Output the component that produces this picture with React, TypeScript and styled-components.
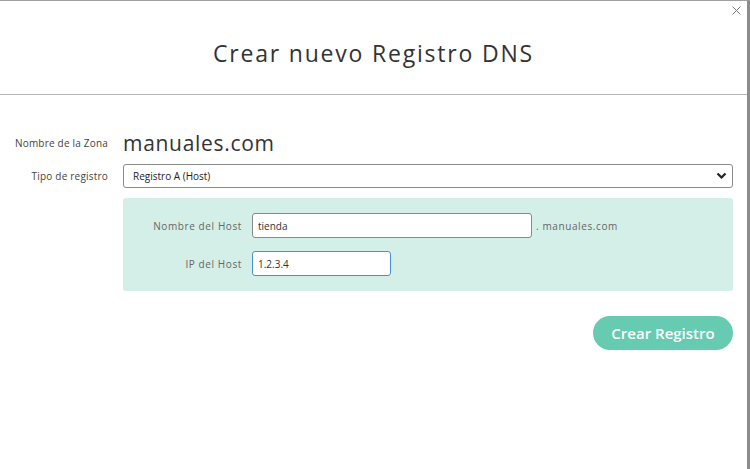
import styled, { createGlobalStyle } from "styled-components";

const GlobalStyle = createGlobalStyle`
  html, body {
    margin: 0;
    padding: 0;
    background: #fff;
  }
  body {
    font-family: "Open Sans", "Liberation Sans", sans-serif;
  }
  * { box-sizing: border-box; }
`;

export default function App() {
  return (
    <>
      <GlobalStyle />
      <Modal>
        <CloseButton aria-label="Cerrar">
          <svg width="9" height="9" viewBox="0 0 9 9">
            <path d="M0.5 0.5 L8.5 8.5 M8.5 0.5 L0.5 8.5" stroke="#777" strokeWidth="1" />
          </svg>
        </CloseButton>
        <Header>
          <Title>Crear nuevo Registro DNS</Title>
        </Header>
        <Body>
          <Row>
            <Label>Nombre de la Zona</Label>
            <Zone>manuales.com</Zone>
          </Row>
          <Row>
            <Label>Tipo de registro</Label>
            <SelectBox>
              <span>Registro A (Host)</span>
              <svg width="11" height="8" viewBox="0 0 11 8">
                <path d="M1.5 1.5 L5.5 5.5 L9.5 1.5" fill="none" stroke="#222" strokeWidth="2.2" />
              </svg>
            </SelectBox>
          </Row>
          <Row>
            <Label />
            <Panel>
              <PanelRow>
                <PanelLabel>Nombre del Host</PanelLabel>
                <Input $width={280} value="tienda" readOnly />
                <Suffix>. manuales.com</Suffix>
              </PanelRow>
              <PanelRow>
                <PanelLabel>IP del Host</PanelLabel>
                <Input $width={139} $focused value="1.2.3.4" readOnly />
              </PanelRow>
            </Panel>
          </Row>
          <Actions>
            <SubmitButton>Crear Registro</SubmitButton>
          </Actions>
        </Body>
      </Modal>
    </>
  );
}

const Modal = styled.div`
  position: relative;
  width: 750px;
  height: 469px;
  border-top: 1px solid #a0a0a0;
  border-right: 3px solid #8c8c8c;
  background: #fff;
`;

const CloseButton = styled.button`
  position: absolute;
  top: 5px;
  right: 6px;
  padding: 0;
  border: none;
  background: none;
  line-height: 0;
  cursor: pointer;
`;

const Header = styled.div`
  height: 94px;
  display: flex;
  align-items: center;
  justify-content: center;
  border-bottom: 1px solid #b5b5b5;
`;

const Title = styled.h1`
  margin: 10px 0 0;
  font-size: 23px;
  font-weight: 400;
  color: #333;
  letter-spacing: 1.8px;
`;

const Body = styled.div`
  padding: 35px 14px 0 0;
  display: flex;
  flex-direction: column;
  gap: 8px;
`;

const Row = styled.div`
  display: flex;
  align-items: center;
  gap: 15px;
`;

const Label = styled.div`
  width: 108px;
  flex-shrink: 0;
  text-align: right;
  font-size: 10px;
  color: #444;
  letter-spacing: 0.2px;
`;

const Zone = styled.div`
  font-size: 21px;
  color: #333;
  letter-spacing: 0.7px;
  line-height: 26px;
`;

const SelectBox = styled.div`
  flex: 1;
  height: 24px;
  display: flex;
  align-items: center;
  justify-content: space-between;
  padding: 0 5px 0 9px;
  border: 1px solid #8a8a8a;
  border-radius: 3px;
  font-size: 10px;
  color: #222;
`;

const Panel = styled.div`
  flex: 1;
  margin-top: 2px;
  padding: 15px 0 15px;
  background: #d4efe7;
  border-radius: 3px;
  display: flex;
  flex-direction: column;
  gap: 13px;
`;

const PanelRow = styled.div`
  display: flex;
  align-items: center;
  gap: 10px;
`;

const PanelLabel = styled.div`
  width: 119px;
  text-align: right;
  font-size: 10px;
  color: #666;
  letter-spacing: 0.6px;
`;

const Input = styled.input<{ $width: number; $focused?: boolean }>`
  width: ${(p) => p.$width}px;
  height: 25px;
  padding: 0 5px;
  font-family: "Open Sans", "Liberation Sans", sans-serif;
  font-size: 10px;
  color: #333;
  background: #fff;
  border: 1px solid ${(p) => (p.$focused ? "#4a90d9" : "#8a8a8a")};
  border-radius: 3px;
  outline: none;
`;

const Suffix = styled.span`
  margin-left: -6px;
  font-size: 10px;
  color: #666;
  letter-spacing: 0.6px;
`;

const Actions = styled.div`
  display: flex;
  justify-content: flex-end;
  margin-top: 17px;
`;

const SubmitButton = styled.button`
  width: 140px;
  height: 34px;
  border: none;
  border-radius: 17px;
  background: #66cbb0;
  color: #fff;
  font-family: "Open Sans", "Liberation Sans", sans-serif;
  font-size: 15px;
  font-weight: 600;
  cursor: pointer;
`;
